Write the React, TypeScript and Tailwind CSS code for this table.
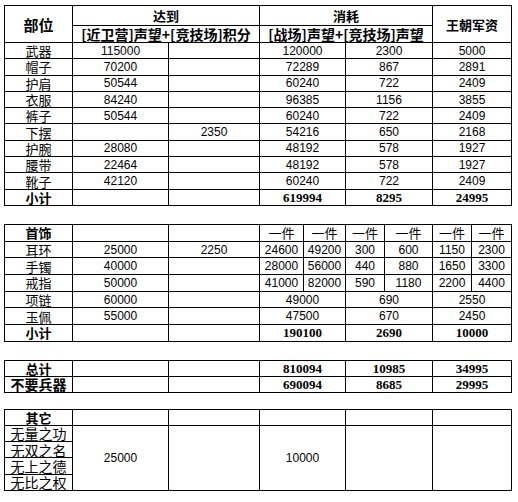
const cell = "border border-black p-0 text-center whitespace-nowrap";
const num = "text-[12px] font-['Liberation_Sans','Noto_Sans_CJK_SC',sans-serif]";
const bnum = "text-[13px] font-bold font-['Liberation_Serif','Noto_Sans_CJK_SC',serif]";
const label = "text-[13px] font-['Noto_Sans_CJK_SC',sans-serif]";
const blabel = "text-[13px] font-bold font-['Noto_Sans_CJK_SC',sans-serif]";

const gear = [
    ["武器", "115000", "", "120000", "2300", "5000"],
    ["帽子", "70200", "", "72289", "867", "2891"],
    ["护肩", "50544", "", "60240", "722", "2409"],
    ["衣服", "84240", "", "96385", "1156", "3855"],
    ["裤子", "50544", "", "60240", "722", "2409"],
    ["下摆", "", "2350", "54216", "650", "2168"],
    ["护腕", "28080", "", "48192", "578", "1927"],
    ["腰带", "22464", "", "48192", "578", "1927"],
    ["靴子", "42120", "", "60240", "722", "2409"],
]

const splitRows = [
    ["耳环", "25000", "2250", "24600", "49200", "300", "600", "1150", "2300"],
    ["手镯", "40000", "", "28000", "56000", "440", "880", "1650", "3300"],
    ["戒指", "50000", "", "41000", "82000", "590", "1180", "2200", "4400"],
]

const mergedRows = [
    ["项链", "60000", "", "49000", "690", "2550"],
    ["玉佩", "55000", "", "47500", "670", "2450"],
]

function Cols() {
    return (
        <colgroup>
            <col className="w-[68px]" />
            <col className="w-[96px]" />
            <col className="w-[91px]" />
            <col className="w-[86px]" />
            <col className="w-[87px]" />
            <col className="w-[79px]" />
        </colgroup>
    )
}

export default function App() {
    return (
        <div className="w-[518px] h-[502px] bg-white text-black pl-[4px] pt-[5px] flex flex-col">
            {/* main gear table */}
            <table className="table-fixed border-collapse w-[507px]">
                <Cols />
                <tbody>
                    <tr className="h-[20px]">
                        <td rowSpan={2} className={`${cell} text-[15px] font-bold font-['Noto_Sans_CJK_SC',sans-serif] leading-none`}>部位</td>
                        <td colSpan={2} className={`${cell} ${blabel} leading-none`}>达到</td>
                        <td colSpan={2} className={`${cell} ${blabel} leading-none`}>消耗</td>
                        <td rowSpan={2} className={`${cell} ${blabel} leading-none`}>王朝军资</td>
                    </tr>
                    <tr className="h-[17px]">
                        <td colSpan={2} className={`${cell} ${blabel} text-[14px] leading-none`}>[近卫营]声望+[竞技场]积分</td>
                        <td colSpan={2} className={`${cell} ${blabel} text-[14px] leading-none`}>[战场]声望+[竞技场]声望</td>
                    </tr>
                    {gear.map((row) => (
                        <tr key={row[0]} className="h-[16.3px]">
                            <td className={`${cell} ${label} leading-none`}>{row[0]}</td>
                            {row.slice(1).map((v, i) => (
                                <td key={i} className={`${cell} ${num} leading-none`}>{v}</td>
                            ))}
                        </tr>
                    ))}
                    <tr className="h-[16.3px]">
                        <td className={`${cell} ${blabel} leading-none`}>小计</td>
                        <td className={cell}></td>
                        <td className={cell}></td>
                        <td className={`${cell} ${bnum} leading-none`}>619994</td>
                        <td className={`${cell} ${bnum} leading-none`}>8295</td>
                        <td className={`${cell} ${bnum} leading-none`}>24995</td>
                    </tr>
                </tbody>
            </table>

            {/* accessories */}
            <table className="table-fixed border-collapse w-[507px] mt-[18px]">
                <colgroup>
                    <col className="w-[68px]" />
                    <col className="w-[96px]" />
                    <col className="w-[91px]" />
                    <col className="w-[44px]" />
                    <col className="w-[42px]" />
                    <col className="w-[39px]" />
                    <col className="w-[48px]" />
                    <col className="w-[39px]" />
                    <col className="w-[40px]" />
                </colgroup>
                <tbody>
                    <tr className="h-[16.7px]">
                        <td className={`${cell} ${blabel} leading-none`}>首饰</td>
                        <td className={cell}></td>
                        <td className={cell}></td>
                        {[0, 1, 2, 3, 4, 5].map((i) => (
                            <td key={i} className={`${cell} ${label} leading-none`}>一件</td>
                        ))}
                    </tr>
                    {splitRows.map((row) => (
                        <tr key={row[0]} className="h-[16.7px]">
                            <td className={`${cell} ${label} leading-none`}>{row[0]}</td>
                            {row.slice(1).map((v, i) => (
                                <td key={i} className={`${cell} ${num} leading-none`}>{v}</td>
                            ))}
                        </tr>
                    ))}
                    {mergedRows.map((row) => (
                        <tr key={row[0]} className="h-[16.7px]">
                            <td className={`${cell} ${label} leading-none`}>{row[0]}</td>
                            <td className={`${cell} ${num} leading-none`}>{row[1]}</td>
                            <td className={`${cell} ${num} leading-none`}>{row[2]}</td>
                            <td colSpan={2} className={`${cell} ${num} leading-none`}>{row[3]}</td>
                            <td colSpan={2} className={`${cell} ${num} leading-none`}>{row[4]}</td>
                            <td colSpan={2} className={`${cell} ${num} leading-none`}>{row[5]}</td>
                        </tr>
                    ))}
                    <tr className="h-[16.7px]">
                        <td className={`${cell} ${blabel} leading-none`}>小计</td>
                        <td className={cell}></td>
                        <td className={cell}></td>
                        <td colSpan={2} className={`${cell} ${bnum} leading-none`}>190100</td>
                        <td colSpan={2} className={`${cell} ${bnum} leading-none`}>2690</td>
                        <td colSpan={2} className={`${cell} ${bnum} leading-none`}>10000</td>
                    </tr>
                </tbody>
            </table>

            {/* totals */}
            <table className="table-fixed border-collapse w-[507px] mt-[18px]">
                <Cols />
                <tbody>
                    <tr className="h-[16px]">
                        <td className={`${cell} ${blabel} leading-none`}>总计</td>
                        <td className={cell}></td>
                        <td className={cell}></td>
                        <td className={`${cell} ${bnum} leading-none`}>810094</td>
                        <td className={`${cell} ${bnum} leading-none`}>10985</td>
                        <td className={`${cell} ${bnum} leading-none`}>34995</td>
                    </tr>
                    <tr className="h-[16px]">
                        <td className={`${cell} ${blabel} text-[14px] leading-none`}>不要兵器</td>
                        <td className={cell}></td>
                        <td className={cell}></td>
                        <td className={`${cell} ${bnum} leading-none`}>690094</td>
                        <td className={`${cell} ${bnum} leading-none`}>8685</td>
                        <td className={`${cell} ${bnum} leading-none`}>29995</td>
                    </tr>
                </tbody>
            </table>

            {/* others */}
            <table className="table-fixed border-collapse w-[507px] mt-[16px]">
                <Cols />
                <tbody>
                    <tr className="h-[16px]">
                        <td className={`${cell} ${blabel} leading-none`}>其它</td>
                        <td className={cell}></td>
                        <td className={cell}></td>
                        <td className={cell}></td>
                        <td className={cell}></td>
                        <td className={cell}></td>
                    </tr>
                    <tr className="h-[16.25px]">
                        <td className={`${cell} ${label} text-[14px] leading-none`}>无量之功</td>
                        <td rowSpan={4} className={`${cell} ${num} leading-none`}>25000</td>
                        <td rowSpan={4} className={cell}></td>
                        <td rowSpan={4} className={`${cell} ${num} leading-none`}>10000</td>
                        <td rowSpan={4} className={cell}></td>
                        <td rowSpan={4} className={cell}></td>
                    </tr>
                    {["无双之名", "无上之德", "无比之权"].map((t) => (
                        <tr key={t} className="h-[16.25px]">
                            <td className={`${cell} ${label} text-[14px] leading-none`}>{t}</td>
                        </tr>
                    ))}
                </tbody>
            </table>
        </div>
    )
}
